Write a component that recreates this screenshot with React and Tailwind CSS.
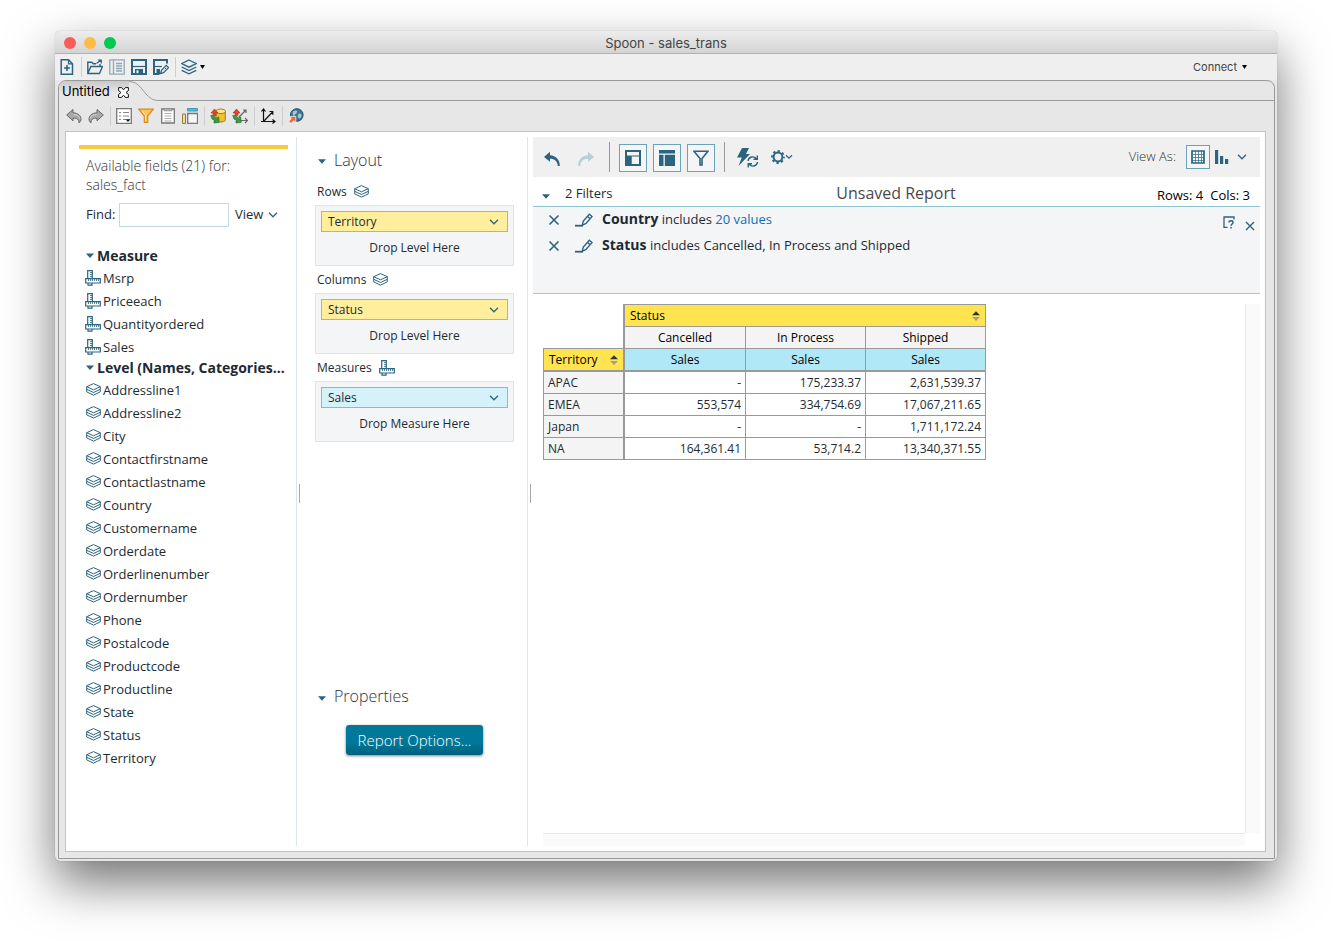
import React from "react";

const measures = ["Msrp", "Priceeach", "Quantityordered", "Sales"];
const levels = [
  "Addressline1", "Addressline2", "City", "Contactfirstname", "Contactlastname", "Country",
  "Customername", "Orderdate", "Orderlinenumber", "Ordernumber", "Phone", "Postalcode",
  "Productcode", "Productline", "State", "Status", "Territory",
];
const statuses = ["Cancelled", "In Process", "Shipped"];
const rows = [
  ["APAC", "-", "175,233.37", "2,631,539.37"],
  ["EMEA", "553,574", "334,754.69", "17,067,211.65"],
  ["Japan", "-", "-", "1,711,172.24"],
  ["NA", "164,361.41", "53,714.2", "13,340,371.55"],
];

function Svg({ w = 16, h = 16, children, className = "" }) {
  return (
    <svg width={w} height={h} viewBox={`0 0 ${w} ${h}`} fill="none" stroke="currentColor" className={`block shrink-0 ${className}`} aria-hidden="true">
      {children}
    </svg>
  );
}

const Caret = () => <Svg w={8} h={5}><path d="M0 .3h8L4 4.800z" fill="currentColor" stroke="none" /></Svg>;
const Chevron = () => <Svg w={10} h={6}><path d="M1 .8l4 4 4-4" strokeWidth="1.3" /></Svg>;
const Cross = () => <Svg w={12} h={12}><path d="M1.5 1.5l9 9M10.500 1.500l-9 9" strokeWidth="1.6" /></Svg>;

const LevelIcon = () => (
  <Svg w={15} h={13}>
    <path d="M7.500.6L14.300 3.700 7.500 6.800.7 3.700zM.7 3.700v5.200l6.800 3.200 6.800-3.200V3.700M.7 6.300l6.800 3.200 6.800-3.200" />
  </Svg>
);

const RulerIcon = () => (
  <Svg w={16} h={16}>
    <path d="M2.700.7h4.600v8H2.700zM.7 8.700h14.600v4.300H.7zM3 13.500v1.700h4v-1.700" strokeWidth="1.2" />
    <path d="M5 2.500h2M5 4.500h2M5 6.500h2M3.500 9v2M5.500 9v2M7.500 9v2M9.500 9v2M11.500 9v2M13.500 9v2" strokeWidth=".8" />
  </Svg>
);

const PencilIcon = () => (
  <Svg w={18} h={14}>
    <path d="M7.200 12.300L8.300 8l6-6.800L17 3.600l-6 6.900zM12.400 3.300l2.700 2.400" strokeWidth="1.4" />
    <path d="M0 12.700h8" strokeWidth="1.8" />
  </Svg>
);

const NewIcon = () => (
  <Svg><path d="M2.200.8h7.300l4 4v10.400H2.200z" strokeWidth="1.5" /><path d="M9.500.8v4h4" strokeWidth="1.2" /><path d="M5 9h6M8 6v6" strokeWidth="1.6" /></Svg>
);
const OpenIcon = () => (
  <Svg><path d="M.8 14.500V3.200h4l1.500 1.600H9M.8 14.500l3-7h11.700l-3 7zM13 7.500V5" strokeWidth="1.4" /><path d="M9.500 4.500L14 1M10.800 1H14.300v3.500" strokeWidth="1.2" /></Svg>
);
const ListPageIcon = () => (
  <Svg className="opacity-50"><path d="M.8.800h14.400v14.400H.8zM4.500 1v14M7 4.500h6M7 7h6M7 9.500h6M7 12h6" strokeWidth="1.3" /></Svg>
);
const SaveIcon = () => (
  <Svg><path d="M1 1h14v14H1z" strokeWidth="2" /><path d="M2 7.500h12" strokeWidth="1.200" /><path d="M4 10h8v5H4z" fill="currentColor" stroke="none" /><path d="M5.500 11.200h2v3h-2z" fill="#eee" stroke="none" /></Svg>
);
const SaveAsIcon = () => (
  <Svg><path d="M6.500 15H1V1h13v3.500" strokeWidth="2" /><path d="M2 7.500h7" strokeWidth="1.200" /><path d="M3.500 10h3.500v5H3.500z" fill="currentColor" stroke="none" /><path d="M7.700 14.500l.8-3.200 4.800-4.900 2.200 2.200-5 5z" strokeWidth="1.300" /><path d="M11.500 8.500l2.200 2.200" /></Svg>
);
const StackIcon = () => (
  <Svg><path d="M8 1l7.300 3.600L8 8.200.7 4.600zM.7 8L8 11.600 15.300 8M.7 11.300L8 14.900l7.300-3.600" strokeWidth="1.300" /></Svg>
);
const CurveArrow = ({ flip }) => (
  <Svg className={flip ? "-scale-x-100" : ""}>
    <path d="M.7 7L7 1.500v3.300c5 .2 8 3 8 6.200 0 1.700-.8 3-2 4 .2-3.500-2-5-6-4.800v2.600z" fill="#a9a9a9" stroke="#666" />
    <path d="M7.500 6.500c3.500 0 6 1.500 6.500 4" stroke="#d5d5d5" />
  </Svg>
);
const FieldListIcon = () => (
  <Svg><path d="M.7.700h14.600v14.600H.7z" fill="#fff" stroke="#777" strokeWidth="1.300" /><path d="M3 4.500h2M3 8h2M3 11.500h2M7 4.500h6M7 8h6M7 11.500h3" stroke="#888" strokeWidth="1.200" /><path d="M9.500 11.200h5L12 14z" fill="#111" stroke="none" /></Svg>
);
const FunnelIcon = () => (
  <Svg><path d="M.8 1.200h14.400L9.700 8v6.500H6.300V8z" fill="#fbc55a" stroke="#d98a1c" strokeWidth="1.200" /><path d="M4 3l3.500 4.500V13" stroke="#fff0cf" /></Svg>
);
const PageIcon = () => (
  <Svg><path d="M1.700 1h12.600v14H1.700z" fill="#fff" stroke="#777" strokeWidth="1.300" /><path d="M4 .800h8v2H4z" fill="#bbb" stroke="#888" strokeWidth=".8" /><path d="M4.500 5.500h7M4.500 8h7M4.500 10.500h7M4.500 13h7" stroke="#999" strokeWidth=".8" /></Svg>
);
const PanelsIcon = () => (
  <Svg><path d="M5.500.500h10v2.500h-10z" fill="#58b7d4" stroke="#3f9dbb" /><path d="M.5 6h3v9.500h-3z" fill="#f3dc8c" stroke="#8d7d4a" /><path d="M5.700 5.500h9.800v10H5.700z" fill="#f6f6f6" stroke="#777" strokeWidth="1.300" /></Svg>
);
const RedGreen = () => (
  <>
    <path d="M1 5l3.500-4L8 5H6v2.500H3V5z" fill="#e2452a" stroke="#a82b17" strokeWidth=".6" />
    <path d="M.7 7.500h3l4 4V9h1l.5 5.500L4 15V13h1.500L2 11z" fill="#3f9a43" stroke="#1f6b2a" strokeWidth=".6" />
  </>
);
const CubeIcon = () => (
  <Svg><path d="M6 3.500v9c2 2 7.500 2 9.300 0v-9z" fill="#f4bf28" stroke="#8a6410" strokeWidth=".8" /><ellipse cx="10.700" cy="3.300" rx="4.700" ry="2.200" fill="#ffe68a" stroke="#8a6410" strokeWidth=".8" /><RedGreen /></Svg>
);
const PivotIcon = () => (
  <Svg><path d="M6.500 9.500l7.500-7.500M11 2h3v3M7 12.500h8M13 10l2.500 2.500L13 15" stroke="#666" strokeWidth="1.200" /><RedGreen /></Svg>
);
const AxesIcon = () => (
  <Svg><path d="M3.500 1v12.500H15M1.500 3.500l2-2.500 2 2.500M12.500 11.500l2.500 2-2.500 2M4 13l8.500-9M9.500 3.500h3.300v3.300M1 13.500h2" stroke="#111" strokeWidth="1.200" /></Svg>
);
const GlobeIcon = () => (
  <Svg><circle cx="8.800" cy="7" r="6.300" fill="#3d7592" stroke="#1e4e68" /><path d="M5 3.500c2-2 5-1 4 1S7 5.500 6.500 7.500 4 6.500 5 3.500zM10.500 6c2-1 3.500 0 3 2s-2 3-3 2-1-3 0-4z" fill="#a4c9d3" stroke="none" /><path d="M7.800 8.500v6l-2-1.800L3 15.500.7 13.200l2.900-2.800L1.800 8.500z" fill="#f0683a" stroke="#fff" strokeWidth=".7" /></Svg>
);

const Sep = () => <span className="-mr-px h-5 w-px bg-[#cfcfcf]" />;

function IconButton({ label, children, className = "" }) {
  return <button type="button" aria-label={label} className={`flex shrink-0 items-center justify-center ${className}`}>{children}</button>;
}

function DropZone({ label, icon, field, hint, blue }) {
  return (
    <section>
      <h3 className="flex h-[27px] items-center gap-[7px] pl-[2px] text-[12px]">{label}{icon}</h3>
      <div className="h-[61px] border border-[#dbe5ea] bg-[#f4f5f7] px-[5px] pt-[5px]">
        <button type="button" aria-haspopup="menu" className={`flex h-[21px] w-full items-center justify-between border pr-2 pl-[6px] text-[12px] ${blue ? "border-[#62c7ea] bg-[#d5f2fa]" : "border-[#e0ae3c] bg-[#ffee9c]"}`}>
          {field}<span className="text-[#2c6480]"><Chevron /></span>
        </button>
        <p className="text-center text-[12px] leading-[32px]">{hint}</p>
      </div>
    </section>
  );
}

function SortIcon() {
  return (
    <Svg w={8} h={10}><path d="M0 4.300h8L4 .3z" fill="#333" stroke="none" /><path d="M0 6h8L4 10z" fill="#a5a08a" stroke="none" /></Svg>
  );
}

function TreeGroup({ title, items, icon }) {
  return (
    <li className="-mb-[3px]">
      <button type="button" aria-expanded="true" className="flex h-[23px] items-center gap-[3px] text-[14px] font-bold whitespace-nowrap">
        <Svg w={8} h={6} className="text-[#2c6480]"><path d="M0 .5h8L4 5z" fill="currentColor" stroke="none" /></Svg>
        {title}
      </button>
      <ul>
        {items.map((name) => (
          <li key={name} className="flex h-[23px] items-center gap-[2px] text-[13px]">
            <span className="-ml-px flex w-4 justify-center pb-[2px] text-[#2c6480]">{icon}</span>
            {name}
          </li>
        ))}
      </ul>
    </li>
  );
}

function FieldsPanel() {
  return (
    <aside className="w-[231px] shrink-0 border-r border-[#dbe5ea] pt-2 pr-2 pl-[13px]">
      <div className="h-1 bg-[#fbc940]" />
      <div className="pt-[7px] pl-[7px]">
        <h2 className="text-[14px] leading-[19px] font-light text-[#333]">Available fields (21) for:<br />sales_fact</h2>
        <div className="mt-[9px] flex items-center text-[13px]">
          <label htmlFor="find" className="w-[33px]">Find:</label>
          <input id="find" type="text" className="h-6 w-[110px] border border-[#c3dbe6] bg-white px-1" />
          <button type="button" aria-haspopup="menu" className="ml-[6px] flex items-center gap-[5px]">View<span className="text-[#2c6480]"><Chevron /></span></button>
        </div>
        <ul className="mt-[17px]">
          <TreeGroup title="Measure" items={measures} icon={<RulerIcon />} />
          <TreeGroup title="Level (Names, Categories..." items={levels} icon={<LevelIcon />} />
        </ul>
      </div>
    </aside>
  );
}

function LayoutPanel() {
  return (
    <section className="flex w-[213px] shrink-0 flex-col justify-between border-r border-[#dbe5ea] pr-[13px]">
      <div>
        <h2 className="flex h-[41px] items-center gap-2 pt-1 pl-[3px] text-[16px] font-light text-[#333]"><span className="pt-1 text-[#2c6480]"><Caret /></span>Layout</h2>
        <DropZone label="Rows" icon={<span className="text-[#2c6480]"><LevelIcon /></span>} field="Territory" hint="Drop Level Here" />
        <DropZone label="Columns" icon={<span className="text-[#2c6480]"><LevelIcon /></span>} field="Status" hint="Drop Level Here" />
        <DropZone label="Measures" icon={<span className="text-[#2c6480]"><RulerIcon /></span>} field="Sales" hint="Drop Measure Here" blue />
      </div>
      <div className="h-[161px]">
        <h2 className="flex items-center gap-2 pl-[3px] text-[16px] leading-[22px] font-light text-[#333]"><span className="pt-1 text-[#2c6480]"><Caret /></span>Properties</h2>
        <div className="mt-[18px] flex justify-center">
          <button type="button" className="h-[30px] rounded-[3px] bg-linear-to-b from-[#007899] from-60% to-[#005f7d] px-3 text-[15px] font-light whitespace-nowrap text-white shadow-[0_1px_3px_rgba(0,0,0,.5)]">Report Options...</button>
        </div>
      </div>
    </section>
  );
}

function ReportToolbar() {
  const box = "h-7 w-7 border border-[#6ba3b6] bg-[#f4f5f7]";
  return (
    <div className="flex h-10 items-center bg-[#f0f0f0] pl-[11px] text-[#2c6480]">
      <IconButton label="Undo" className="pt-1"><Svg><path d="M6 .800L0 6l6 4.800V7.800c4.500 0 7.500 2 7.800 7.200h2C16 9 12 4.300 6 4.200z" fill="currentColor" stroke="none" /></Svg></IconButton>
      <IconButton label="Redo" className="ml-[18px] pt-1 text-[#b5cfda]"><Svg className="-scale-x-100"><path d="M6 .800L0 6l6 4.800V7.800c4.500 0 7.500 2 7.800 7.200h2C16 9 12 4.300 6 4.200z" fill="currentColor" stroke="none" /></Svg></IconButton>
      <span className="ml-[15px] h-[30px] w-px bg-[#999]" />
      <div className="mx-[9px] flex gap-[6px] pt-[2px]">
        <IconButton label="Toggle field list" className={box}><Svg><path d="M1 1h14v14H1z" strokeWidth="2" /><path d="M1 6h14M6 6v9" strokeWidth="1" /><path d="M1 6.500h5V15H1z" fill="currentColor" /></Svg></IconButton>
        <IconButton label="Toggle layout panel" className={box}><Svg><path d="M0 0h16v3.500H0zM0 4.700h4.500V16H0zM5.800 4.700H16V16H5.800z" fill="currentColor" stroke="none" /></Svg></IconButton>
        <IconButton label="Toggle filters" className={box}><Svg><path d="M1 1.200h14L9 8.500V15H7V8.500z" strokeWidth="1.600" /></Svg></IconButton>
      </div>
      <span className="h-[30px] w-px bg-[#999]" />
      <IconButton label="Auto refresh" className="ml-3 pt-px">
        <Svg w={22} h={20}><path d="M5 0h7L9 6h4L1.500 18l3.300-8.500H0z" fill="currentColor" stroke="none" /><path d="M11 13c.5-4.500 6-5.500 8.500-2M20.500 14c-.5 4.500-6 5.500-8.500 2M20.300 7.500v3.700h-3.800M11.200 19.500v-3.700H15" strokeWidth="1.400" /></Svg>
      </IconButton>
      <button type="button" aria-label="Settings" aria-haspopup="menu" className="ml-3 flex items-center">
        <Svg w={14} h={14}><circle cx="7" cy="7" r="4.400" strokeWidth="2" /><circle cx="7" cy="7" r="6" strokeWidth="1.800" strokeDasharray="2.350 2.350" strokeDashoffset="1" /></Svg>
        <Svg w={8} h={6}><path d="M1 1.200l3 3 3-3" strokeWidth="1.300" /></Svg>
      </button>
      <span className="ml-auto text-[13px] font-light text-[#333]">View As:</span>
      <IconButton label="Table" className="ml-[10px] h-6 w-6 border border-[#6ba3b6] bg-[#f4f5f7]">
        <Svg w={14} h={14}><path d="M1 1h12v12H1z" strokeWidth="1.700" /><path d="M4.500 1v12M7.500 1v12M10.500 1v12M1 4.500h12M1 7.500h12M1 10.500h12" strokeWidth=".7" /></Svg>
      </IconButton>
      <IconButton label="Chart" className="ml-[5px]"><Svg w={14} h={14}><path d="M0 0h3.200v14H0zM5 6h3.200v8H5zM10 9h3.200v5H10z" fill="currentColor" stroke="none" /></Svg></IconButton>
      <IconButton label="Choose chart type" className="mr-[13px] ml-2"><Chevron /></IconButton>
    </div>
  );
}

function FilterRow({ name, children }) {
  return (
    <li className="flex h-6 items-center text-[13px]">
      <IconButton label={`Remove ${name} filter`} className="mr-[15px] pt-[2px] text-[#2c6480]"><Cross /></IconButton>
      <IconButton label={`Edit ${name} filter`} className="mr-[9px] pt-[2px] text-[#2c6480]"><PencilIcon /></IconButton>
      <p><b className="text-[14px]">{name}</b> {children}</p>
    </li>
  );
}

function Filters() {
  return (
    <div className="flex h-[87px] items-start justify-between border-b border-[#a5c8d6] bg-[#f4f5f7] pl-[15px]">
      <ul className="flex flex-col gap-[2px]">
        <FilterRow name="Country">includes <a href="#values" className="text-[#0d6fb5]">20 values</a></FilterRow>
        <FilterRow name="Status">includes Cancelled, In Process and Shipped</FilterRow>
      </ul>
      <div className="flex items-start gap-[9px] pt-[9px] pr-1 text-[#2c6480]">
        <IconButton label="Help"><Svg w={12} h={13}><path d="M4.500 11.300H1V1h10v2.500" strokeWidth="1.300" /><path d="M6 6.500c0-2.300 4-2.300 4 0 0 1.500-2 1.500-2 3.300M8 11v1.500" strokeWidth="1.500" /></Svg></IconButton>
        <IconButton label="Close filters" className="pt-1"><Svg w={12} h={12}><path d="M2 2l8 8M10 2l-8 8" strokeWidth="1.400" /></Svg></IconButton>
      </div>
    </div>
  );
}

function Pivot() {
  const cell = "border-r border-b border-[#999] px-1 font-normal";
  return (
    <table className="table-fixed border-separate border-spacing-0 text-[12px] leading-[16px]">
      <colgroup><col className="w-[82px]" /><col className="w-[121px]" /><col className="w-[120px]" /><col className="w-[120px]" /></colgroup>
      <thead className="text-black">
        <tr className="h-[23px]">
          <td rowSpan={2} className="border-r-2 border-b border-[#999]" />
          <th colSpan={3} scope="colgroup" className="border-t border-r border-b border-[#999] bg-[#ffe34f] p-0 font-normal">
            <button type="button" className="flex w-full items-center justify-between px-[5px]">Status<SortIcon /></button>
          </th>
        </tr>
        <tr className="h-[22px]">
          {statuses.map((s) => <th key={s} scope="col" className={`${cell} bg-[#f4f4f4]`}>{s}</th>)}
        </tr>
        <tr className="h-[23px]">
          <th scope="col" className="border-r-2 border-b-2 border-l border-[#999] bg-[#ffe34f] p-0 font-normal">
            <button type="button" className="flex w-full items-center justify-between px-[5px]">Territory<SortIcon /></button>
          </th>
          {statuses.map((s) => <th key={s} scope="col" className="border-r border-b-2 border-[#999] bg-[#b1e8f8] font-normal">Sales</th>)}
        </tr>
      </thead>
      <tbody>
        {rows.map(([name, ...values]) => (
          <tr key={name} className="h-[22px]">
            <th scope="row" className="border-r-2 border-b border-l border-[#999] bg-[#f4f4f4] px-1 py-0 text-left font-normal">{name}</th>
            {values.map((v, i) => <td key={i} className={`${cell} py-0 text-right`}>{v}</td>)}
          </tr>
        ))}
      </tbody>
    </table>
  );
}

function Splitter({ className }) {
  return (
    <div className={`flex shrink-0 items-center pt-1 pl-[2px] ${className}`}><span className="h-[19px] w-px bg-[#aaa]" /></div>
  );
}

export default function App() {
  return (
    <div className="flex min-h-screen flex-col bg-white pt-[31px] pr-14 pb-20 pl-[55px] font-['Open_Sans',sans-serif] text-[#1c2b33]">
      <div className="flex flex-1 flex-col rounded-[5px] bg-[#e7e7e7] shadow-[0_22px_50px_rgba(0,0,0,.55),0_0_1px_rgba(0,0,0,.4)]">
        <header className="grid h-[23px] grid-cols-[1fr_auto_1fr] items-center rounded-t-[5px] border-b border-[#b0b0b0] bg-linear-to-b from-[#ededed] to-[#d3d3d3] px-[9px] pt-[2px] font-[Inter,sans-serif]">
          <div className="flex gap-2">
            <button type="button" aria-label="Close" className="h-3 w-3 rounded-full bg-[#fc5b57]" />
            <button type="button" aria-label="Minimize" className="h-3 w-3 rounded-full bg-[#fdbb47]" />
            <button type="button" aria-label="Zoom" className="h-3 w-3 rounded-full bg-[#00ca4e]" />
          </div>
          <h1 className="pt-px text-[13px] text-[#444]">Spoon - sales_trans</h1>
        </header>

        <div className="flex h-[26px] items-center gap-[6px] bg-[#efefef] pl-1 text-[#2c6480]">
          <IconButton label="New file"><NewIcon /></IconButton>
          <Sep />
          <IconButton label="Open file"><OpenIcon /></IconButton>
          <IconButton label="Explore repository"><ListPageIcon /></IconButton>
          <IconButton label="Save"><SaveIcon /></IconButton>
          <IconButton label="Save as"><SaveAsIcon /></IconButton>
          <Sep />
          <button type="button" aria-label="Perspectives" aria-haspopup="menu" className="flex items-center gap-[3px]">
            <StackIcon /><Svg w={5} h={4}><path d="M0 0h5L2.500 4z" fill="#000" stroke="none" /></Svg>
          </button>
          <button type="button" aria-haspopup="menu" className="mr-[30px] ml-auto flex items-center gap-[5px] font-[Inter,sans-serif] text-[11px] text-[#444]">
            Connect<Svg w={5} h={4}><path d="M0 0h5L2.500 4z" fill="#000" stroke="none" /></Svg>
          </button>
        </div>

        <div className="mr-[2px] mb-[2px] ml-[3px] flex flex-1 flex-col rounded-t-[8px] border border-[#999] px-[6px] pb-[6px]">
          <div className="-mx-[6px] flex h-5">
            <div className="flex items-center gap-2 rounded-tl-[7px] bg-linear-to-b from-[#c9c9c9] to-[#e7e7e7] to-60% pt-[2px] pl-[3px] font-[Inter,sans-serif] text-[13px] text-black">
              Untitled
              <IconButton label="Close tab"><Svg w={11} h={11}><path d="M.6.600h3l1.900 2.200L7.400.600h3v3L8 5.500l2.400 1.900v3h-3L5.500 8.200l-1.900 2.200h-3v-3L3 5.500.6 3.600z" fill="#fff" stroke="#111" /></Svg></IconButton>
            </div>
            <Svg w={30} h={20}><path d="M0 .5C10 1 12 8 18 14c4 4 7 5.500 12 5.500" stroke="#999" /></Svg>
            <div className="flex-1 border-b border-[#999]" />
          </div>
          <div className="flex h-[30px] items-center gap-[6px] pl-px">
            <IconButton label="Undo step"><CurveArrow /></IconButton>
            <IconButton label="Redo step"><CurveArrow flip /></IconButton>
            <Sep />
            <IconButton label="Field options"><FieldListIcon /></IconButton>
            <IconButton label="Filter"><FunnelIcon /></IconButton>
            <IconButton label="Properties"><PageIcon /></IconButton>
            <IconButton label="Panels"><PanelsIcon /></IconButton>
            <Sep />
            <IconButton label="Refresh data"><CubeIcon /></IconButton>
            <IconButton label="Swap axes"><PivotIcon /></IconButton>
            <Sep />
            <IconButton label="Axes"><AxesIcon /></IconButton>
            <Sep />
            <IconButton label="Publish"><GlobeIcon /></IconButton>
          </div>

          <main className="mr-[2px] flex flex-1 border border-[#c2c2c2] bg-white py-[5px] pr-[5px]">
            <FieldsPanel />
            <Splitter className="w-[18px]" />
            <LayoutPanel />
            <Splitter className="w-[5px]" />
            <section className="flex min-w-0 flex-1 flex-col">
              <ReportToolbar />
              <div className="grid h-[30px] grid-cols-[1fr_auto_1fr] items-center border-b border-[#8fc5d0] pr-[10px] pl-[9px]">
                <button type="button" aria-expanded="true" className="flex items-center gap-[15px] pt-[5px] text-[13px]"><span className="pt-1 text-[#2c6480]"><Caret /></span>2 Filters</button>
                <h2 className="pt-[2px] text-[16px] text-[#4a4a4a]">Unsaved Report</h2>
                <p className="flex justify-end gap-[7px] pt-[9px] text-[13px] text-black"><span>Rows: 4</span><span>Cols: 3</span></p>
              </div>
              <Filters />
              <div className="flex flex-1 pt-[10px] pl-[10px]">
                <div className="flex min-w-0 flex-1 flex-col">
                  <div className="flex-1"><Pivot /></div>
                  <div className="h-[13px] border-t border-[#e8e8e8] bg-[#fafafa]" />
                </div>
                <div className="mb-[13px] w-[15px] border-l border-[#e8e8e8] bg-[#fafafa]" />
              </div>
            </section>
          </main>
        </div>
      </div>
    </div>
  );
}
